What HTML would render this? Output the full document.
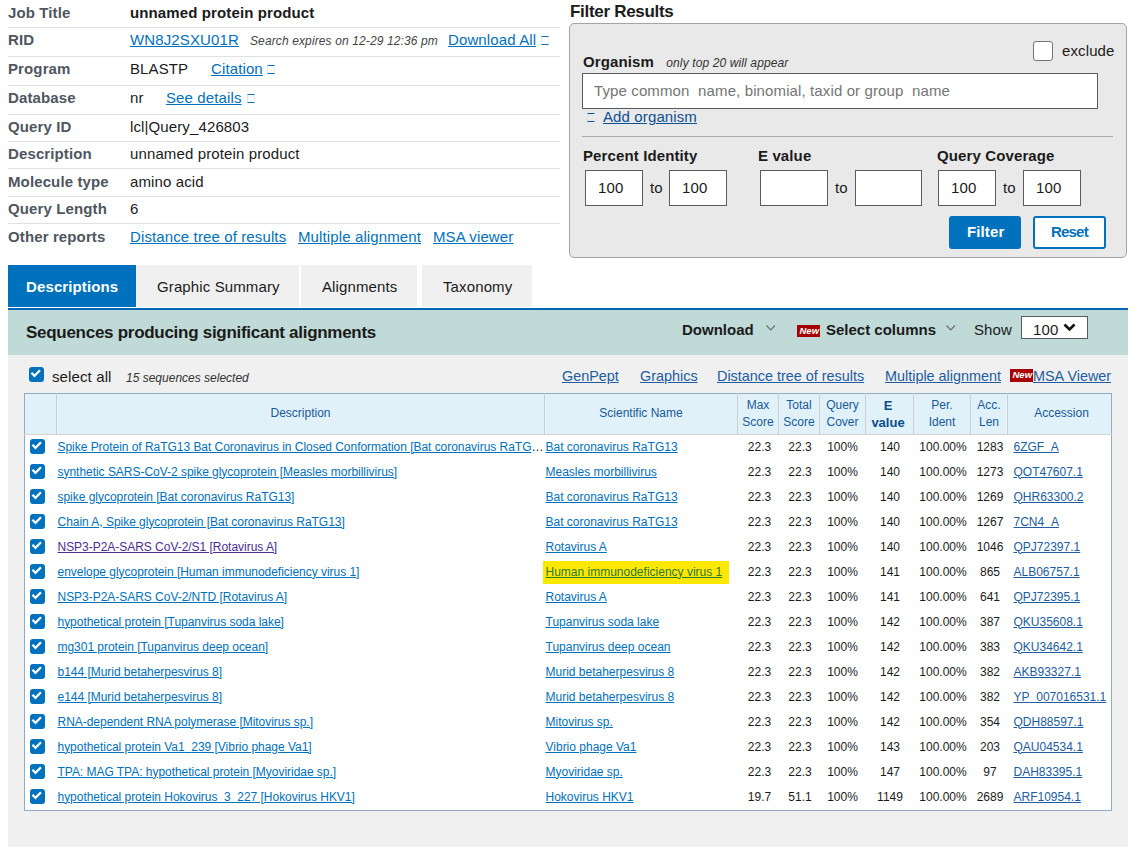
<!DOCTYPE html>
<html><head><meta charset="utf-8">
<style>
*{box-sizing:border-box;margin:0;padding:0}
html,body{width:1137px;height:865px;overflow:hidden;background:#fff}
body{font-family:"Liberation Sans",sans-serif;font-size:15px;color:#1b1b1b;position:relative}
.a{position:absolute;white-space:nowrap;line-height:17px;letter-spacing:0.12px}
.lbl{font-weight:bold;color:#4f5660}
.lk{color:#0071bc;text-decoration:underline}
.ln{position:absolute;left:8px;width:552px;height:1px;background:#dfe1e2}
.ext{position:absolute;width:8px;height:9px;border-top:1px solid #0071bc;border-bottom:1px solid #0071bc;border-left:1px solid #e4e4f4;border-right:1px solid #ececec}
.i12{font-size:12px;font-style:italic;color:#333}
.fb{position:absolute;background:#fff;border:1px solid #565c65}
.flbl{font-weight:bold;color:#1b1b1b}
.tab{position:absolute;top:265px;height:42px;background:#f0f0f0}
.chk{position:absolute;width:15px;height:15px;background:#0071bc;border-radius:3px}
.chk svg{position:absolute;left:0;top:0}
.newb{position:absolute;width:23px;height:12px;background:#a80000;color:#fff;font-size:9.5px;font-weight:bold;font-style:italic;line-height:13px;padding-left:2.5px;white-space:nowrap;letter-spacing:0}
.dk{color:#205da0;text-decoration:underline}
table.res{position:absolute;left:24px;top:393px;width:1088px;border-collapse:collapse;table-layout:fixed;font-size:12px;background:#fff}
table.res{border:1px solid #8fabc7}
.res th{background:#e1f1f9;color:#165a98;font-weight:normal;height:41px;line-height:17px;border-left:1px solid #cfcfcf;border-bottom:1px solid #d4d4d4;padding:0}
.res th:first-child{border-left:none}
.res td{height:25px;padding:0;text-align:center;white-space:nowrap;overflow:hidden;color:#1b1b1b;position:relative;line-height:17px}
.res td .chk{left:5px;top:4px}
.res td.d{text-align:left;padding-left:1px;letter-spacing:-0.03px}
.res td.s{text-align:left;padding-left:1px;overflow:visible}
.res td.acc{text-align:left;padding-left:6px}
.us{position:relative;top:-1px}
.res td:nth-child(4){padding-left:3px}.res td:nth-child(5){padding-left:2px}.res td:nth-child(7){padding-left:1px}.res td:nth-child(8){padding-left:2px}.res td:nth-child(9){padding-left:2px}
.res tbody tr:last-child td{height:26px}
.res a{color:#0071bc;text-decoration:underline}
.res td.acc a{color:#205da0}
.res a.v{color:#4c2c92}
.hl{position:absolute;left:-2px;top:1px;width:186px;height:23px;background:#ffe800}
</style></head><body>

<!-- info table -->
<div class="a lbl" style="left:8px;top:4px">Job Title</div>
<div class="a" style="left:130px;top:4px;font-weight:bold">unnamed protein product</div>
<div class="ln" style="top:27px"></div>
<div class="a lbl" style="left:8px;top:31px">RID</div>
<div class="a lk" style="left:130px;top:31px">WN8J2SXU01R</div>
<div class="a i12" style="left:250px;top:33px;letter-spacing:0.12px;color:#444">Search expires on 12-29 12:36 pm</div>
<div class="a lk" style="left:448px;top:31px">Download All</div>
<span class="ext" style="left:541px;top:36px"></span>
<div class="ln" style="top:56px"></div>
<div class="a lbl" style="left:8px;top:60px">Program</div>
<div class="a" style="left:130px;top:60px">BLASTP</div>
<div class="a lk" style="left:211px;top:60px">Citation</div>
<span class="ext" style="left:267px;top:65px"></span>
<div class="ln" style="top:85px"></div>
<div class="a lbl" style="left:8px;top:89px">Database</div>
<div class="a" style="left:130px;top:89px">nr</div>
<div class="a lk" style="left:166px;top:89px">See details</div>
<span class="ext" style="left:247px;top:94px"></span>
<div class="ln" style="top:114px"></div>
<div class="a lbl" style="left:8px;top:118px">Query ID</div>
<div class="a" style="left:130px;top:118px">lcl|Query_426803</div>
<div class="ln" style="top:141px"></div>
<div class="a lbl" style="left:8px;top:145px">Description</div>
<div class="a" style="left:130px;top:145px">unnamed protein product</div>
<div class="ln" style="top:168px"></div>
<div class="a lbl" style="left:8px;top:173px">Molecule type</div>
<div class="a" style="left:130px;top:173px">amino acid</div>
<div class="ln" style="top:196px"></div>
<div class="a lbl" style="left:8px;top:200px">Query Length</div>
<div class="a" style="left:130px;top:200px">6</div>
<div class="ln" style="top:223px"></div>
<div class="a lbl" style="left:8px;top:228px">Other reports</div>
<div class="a lk" style="left:130px;top:228px">Distance tree of results</div>
<div class="a lk" style="left:298px;top:228px">Multiple alignment</div>
<div class="a lk" style="left:433px;top:228px">MSA viewer</div>

<!-- filter -->
<div class="a" style="left:570px;top:3px;font-size:17px;font-weight:bold;letter-spacing:-0.3px;color:#1b1b1b">Filter Results</div>
<div style="position:absolute;left:569px;top:23px;width:558px;height:235px;background:#e9e9e9;border:1px solid #a4a4a4;border-radius:5px"></div>
<div style="position:absolute;left:1033px;top:41px;width:20px;height:20px;background:#fff;border:1px solid #71767a;border-radius:3px"></div>
<div class="a" style="left:1062px;top:42px">exclude</div>
<div class="a flbl" style="left:583px;top:53px">Organism <span class="i12" style="font-weight:normal;margin-left:8px">only top 20 will appear</span></div>
<div class="fb" style="left:582px;top:73px;width:516px;height:36px"></div>
<div class="a" style="left:594px;top:82px;color:#757575">Type common&nbsp; name, binomial, taxid or group&nbsp; name</div>
<span class="ext" style="left:587px;top:113px;width:8px;height:9px;border-top-color:#0d5090;border-bottom-color:#0d5090"></span>
<div class="a dk" style="left:603px;top:108px;color:#0d5090">Add organism</div>
<div style="position:absolute;left:582px;top:136px;width:531px;height:1px;background:#aaa"></div>
<div class="a flbl" style="left:583px;top:147px">Percent Identity</div>
<div class="a flbl" style="left:758px;top:147px">E value</div>
<div class="a flbl" style="left:937px;top:147px">Query Coverage</div>
<div class="fb" style="left:585px;top:170px;width:58px;height:36px"></div>
<div class="a" style="left:598px;top:179px">100</div>
<div class="a" style="left:650px;top:179px">to</div>
<div class="fb" style="left:669px;top:170px;width:58px;height:36px"></div>
<div class="a" style="left:682px;top:179px">100</div>
<div class="fb" style="left:760px;top:170px;width:68px;height:36px"></div>
<div class="a" style="left:835px;top:179px">to</div>
<div class="fb" style="left:855px;top:170px;width:67px;height:36px"></div>
<div class="fb" style="left:938px;top:170px;width:58px;height:36px"></div>
<div class="a" style="left:951px;top:179px">100</div>
<div class="a" style="left:1003px;top:179px">to</div>
<div class="fb" style="left:1023px;top:170px;width:58px;height:36px"></div>
<div class="a" style="left:1036px;top:179px">100</div>
<div style="position:absolute;left:949px;top:216px;width:72px;height:33px;background:#0071bc;border-radius:3px"></div>
<div class="a" style="left:967px;top:223px;color:#fff;font-weight:bold">Filter</div>
<div style="position:absolute;left:1033px;top:216px;width:73px;height:33px;background:#fff;border:2px solid #0071bc;border-radius:3px"></div>
<div class="a" style="left:1051px;top:223px;color:#0071bc;font-weight:bold;letter-spacing:-0.8px">Reset</div>

<!-- tabs -->
<div class="tab" style="left:8px;width:128px;background:#0071bc"></div>
<div class="a" style="left:26px;top:278px;color:#fff;font-weight:bold">Descriptions</div>
<div class="tab" style="left:136px;width:163px"></div>
<div class="a" style="left:157px;top:278px">Graphic Summary</div>
<div class="tab" style="left:301px;width:116px"></div>
<div class="a" style="left:322px;top:278px">Alignments</div>
<div class="tab" style="left:422px;width:110px"></div>
<div class="a" style="left:443px;top:278px">Taxonomy</div>
<div style="position:absolute;left:8px;top:308px;width:1120px;height:2px;background:#0067b5"></div>

<!-- teal band -->
<div style="position:absolute;left:8px;top:310px;width:1120px;height:45px;background:#bfdad7"></div>
<div class="a" style="left:26px;top:324px;font-size:17px;font-weight:bold;letter-spacing:-0.28px;color:#1b1b1b">Sequences producing significant alignments</div>
<div class="a" style="left:682px;top:321px;font-weight:bold;color:#1b1b1b;letter-spacing:0">Download</div>
<svg style="position:absolute;left:766px;top:325px" width="10" height="6"><polyline points="0.5,0.5 4.75,5 9,0.5" fill="none" stroke="#6b6b6b" stroke-width="1.1"/></svg>
<div class="newb" style="left:797px;top:325px;line-height:11px">New</div>
<div class="a" style="left:826px;top:321px;font-weight:bold;color:#1b1b1b;letter-spacing:0">Select columns</div>
<svg style="position:absolute;left:946px;top:325px" width="10" height="6"><polyline points="0.5,0.5 4.75,5 9,0.5" fill="none" stroke="#6b6b6b" stroke-width="1.1"/></svg>
<div class="a" style="left:974px;top:321px;color:#1b1b1b">Show</div>
<div style="position:absolute;left:1021px;top:316px;width:67px;height:23px;background:#fff;border:1px solid #565c65"></div>
<div class="a" style="left:1033px;top:321px">100</div>
<svg style="position:absolute;left:1063px;top:323px" width="13" height="9"><polyline points="1.5,1.5 6.5,6.5 11.5,1.5" fill="none" stroke="#111" stroke-width="2.6"/></svg>

<!-- gray area -->
<div style="position:absolute;left:8px;top:355px;width:1120px;height:492px;background:#f0f0f0"></div>
<div class="chk" style="left:29px;top:367px"><svg width="15" height="15"><polyline points="2.4,5.8 5.5,8.9 11,3.3" fill="none" stroke="#fff" stroke-width="2.3"/></svg></div>
<div class="a" style="left:52px;top:368px">select all</div>
<div class="a i12" style="left:126px;top:370px;letter-spacing:0">15 sequences selected</div>
<div class="a dk" style="left:562px;top:368px;font-size:14.4px;letter-spacing:0">GenPept</div>
<div class="a dk" style="left:640px;top:368px;font-size:14.4px;letter-spacing:0">Graphics</div>
<div class="a dk" style="left:717px;top:368px;font-size:14.4px;letter-spacing:0">Distance tree of results</div>
<div class="a dk" style="left:885px;top:368px;font-size:14.4px;letter-spacing:0">Multiple alignment</div>
<div class="newb" style="left:1010px;top:369px;height:13px;line-height:12px">New</div>
<div class="a dk" style="left:1033px;top:368px;font-size:14.4px;letter-spacing:0">MSA Viewer</div>

<table class="res">
<colgroup><col style="width:32px"><col style="width:488px"><col style="width:193px"><col style="width:41px"><col style="width:41px"><col style="width:46px"><col style="width:48px"><col style="width:57px"><col style="width:37px"><col style="width:104px"></colgroup>
<thead><tr><th></th><th style="padding-bottom:2px">Description</th><th style="padding-bottom:2px">Scientific Name</th><th>Max<br>Score</th><th>Total<br>Score</th><th>Query<br>Cover</th><th style="font-weight:bold;font-size:13px;color:#0b4c8a;padding-right:3px">E<br>value</th><th>Per.<br>Ident</th><th>Acc.<br>Len</th><th style="padding:0 0 2px 4px">Accession</th></tr></thead>
<tbody id="tb">
<tr><td><i class="chk"><svg width="15" height="15"><polyline points="2.4,5.8 5.5,8.9 11,3.3" fill="none" stroke="#fff" stroke-width="2.3"/></svg></i></td><td class="d"><a style="letter-spacing:-0.035px">Spike Protein of RaTG13 Bat Coronavirus in Closed Conformation [Bat coronavirus RaTG</a><span style="color:#1b1b1b">…</span></td><td class="s"><a>Bat coronavirus RaTG13</a></td><td>22.3</td><td>22.3</td><td>100%</td><td>140</td><td>100.00%</td><td>1283</td><td class="acc"><a>6ZGF<span class="us">_</span>A</a></td></tr>
<tr><td><i class="chk"><svg width="15" height="15"><polyline points="2.4,5.8 5.5,8.9 11,3.3" fill="none" stroke="#fff" stroke-width="2.3"/></svg></i></td><td class="d"><a>synthetic SARS-CoV-2 spike glycoprotein [Measles morbillivirus]</a></td><td class="s"><a>Measles morbillivirus</a></td><td>22.3</td><td>22.3</td><td>100%</td><td>140</td><td>100.00%</td><td>1273</td><td class="acc"><a>QOT47607.1</a></td></tr>
<tr><td><i class="chk"><svg width="15" height="15"><polyline points="2.4,5.8 5.5,8.9 11,3.3" fill="none" stroke="#fff" stroke-width="2.3"/></svg></i></td><td class="d"><a>spike glycoprotein [Bat coronavirus RaTG13]</a></td><td class="s"><a>Bat coronavirus RaTG13</a></td><td>22.3</td><td>22.3</td><td>100%</td><td>140</td><td>100.00%</td><td>1269</td><td class="acc"><a>QHR63300.2</a></td></tr>
<tr><td><i class="chk"><svg width="15" height="15"><polyline points="2.4,5.8 5.5,8.9 11,3.3" fill="none" stroke="#fff" stroke-width="2.3"/></svg></i></td><td class="d"><a>Chain A, Spike glycoprotein [Bat coronavirus RaTG13]</a></td><td class="s"><a>Bat coronavirus RaTG13</a></td><td>22.3</td><td>22.3</td><td>100%</td><td>140</td><td>100.00%</td><td>1267</td><td class="acc"><a>7CN4<span class="us">_</span>A</a></td></tr>
<tr><td><i class="chk"><svg width="15" height="15"><polyline points="2.4,5.8 5.5,8.9 11,3.3" fill="none" stroke="#fff" stroke-width="2.3"/></svg></i></td><td class="d"><a class="v">NSP3-P2A-SARS CoV-2/S1 [Rotavirus A]</a></td><td class="s"><a>Rotavirus A</a></td><td>22.3</td><td>22.3</td><td>100%</td><td>140</td><td>100.00%</td><td>1046</td><td class="acc"><a>QPJ72397.1</a></td></tr>
<tr><td><i class="chk"><svg width="15" height="15"><polyline points="2.4,5.8 5.5,8.9 11,3.3" fill="none" stroke="#fff" stroke-width="2.3"/></svg></i></td><td class="d"><a>envelope glycoprotein [Human immunodeficiency virus 1]</a></td><td class="s"><i class="hl"></i><a style="position:relative;color:#2a7a2a">Human immunodeficiency virus 1</a></td><td>22.3</td><td>22.3</td><td>100%</td><td>141</td><td>100.00%</td><td>865</td><td class="acc"><a>ALB06757.1</a></td></tr>
<tr><td><i class="chk"><svg width="15" height="15"><polyline points="2.4,5.8 5.5,8.9 11,3.3" fill="none" stroke="#fff" stroke-width="2.3"/></svg></i></td><td class="d"><a>NSP3-P2A-SARS CoV-2/NTD [Rotavirus A]</a></td><td class="s"><a>Rotavirus A</a></td><td>22.3</td><td>22.3</td><td>100%</td><td>141</td><td>100.00%</td><td>641</td><td class="acc"><a>QPJ72395.1</a></td></tr>
<tr><td><i class="chk"><svg width="15" height="15"><polyline points="2.4,5.8 5.5,8.9 11,3.3" fill="none" stroke="#fff" stroke-width="2.3"/></svg></i></td><td class="d"><a>hypothetical protein [Tupanvirus soda lake]</a></td><td class="s"><a>Tupanvirus soda lake</a></td><td>22.3</td><td>22.3</td><td>100%</td><td>142</td><td>100.00%</td><td>387</td><td class="acc"><a>QKU35608.1</a></td></tr>
<tr><td><i class="chk"><svg width="15" height="15"><polyline points="2.4,5.8 5.5,8.9 11,3.3" fill="none" stroke="#fff" stroke-width="2.3"/></svg></i></td><td class="d"><a>mg301 protein [Tupanvirus deep ocean]</a></td><td class="s"><a>Tupanvirus deep ocean</a></td><td>22.3</td><td>22.3</td><td>100%</td><td>142</td><td>100.00%</td><td>383</td><td class="acc"><a>QKU34642.1</a></td></tr>
<tr><td><i class="chk"><svg width="15" height="15"><polyline points="2.4,5.8 5.5,8.9 11,3.3" fill="none" stroke="#fff" stroke-width="2.3"/></svg></i></td><td class="d"><a>b144 [Murid betaherpesvirus 8]</a></td><td class="s"><a>Murid betaherpesvirus 8</a></td><td>22.3</td><td>22.3</td><td>100%</td><td>142</td><td>100.00%</td><td>382</td><td class="acc"><a>AKB93327.1</a></td></tr>
<tr><td><i class="chk"><svg width="15" height="15"><polyline points="2.4,5.8 5.5,8.9 11,3.3" fill="none" stroke="#fff" stroke-width="2.3"/></svg></i></td><td class="d"><a>e144 [Murid betaherpesvirus 8]</a></td><td class="s"><a>Murid betaherpesvirus 8</a></td><td>22.3</td><td>22.3</td><td>100%</td><td>142</td><td>100.00%</td><td>382</td><td class="acc"><a>YP<span class="us">_</span>007016531.1</a></td></tr>
<tr><td><i class="chk"><svg width="15" height="15"><polyline points="2.4,5.8 5.5,8.9 11,3.3" fill="none" stroke="#fff" stroke-width="2.3"/></svg></i></td><td class="d"><a>RNA-dependent RNA polymerase [Mitovirus sp.]</a></td><td class="s"><a>Mitovirus sp.</a></td><td>22.3</td><td>22.3</td><td>100%</td><td>142</td><td>100.00%</td><td>354</td><td class="acc"><a>QDH88597.1</a></td></tr>
<tr><td><i class="chk"><svg width="15" height="15"><polyline points="2.4,5.8 5.5,8.9 11,3.3" fill="none" stroke="#fff" stroke-width="2.3"/></svg></i></td><td class="d"><a>hypothetical protein Va1<span class="us">_</span>239 [Vibrio phage Va1]</a></td><td class="s"><a>Vibrio phage Va1</a></td><td>22.3</td><td>22.3</td><td>100%</td><td>143</td><td>100.00%</td><td>203</td><td class="acc"><a>QAU04534.1</a></td></tr>
<tr><td><i class="chk"><svg width="15" height="15"><polyline points="2.4,5.8 5.5,8.9 11,3.3" fill="none" stroke="#fff" stroke-width="2.3"/></svg></i></td><td class="d"><a>TPA: MAG TPA: hypothetical protein [Myoviridae sp.]</a></td><td class="s"><a>Myoviridae sp.</a></td><td>22.3</td><td>22.3</td><td>100%</td><td>147</td><td>100.00%</td><td>97</td><td class="acc"><a>DAH83395.1</a></td></tr>
<tr><td><i class="chk"><svg width="15" height="15"><polyline points="2.4,5.8 5.5,8.9 11,3.3" fill="none" stroke="#fff" stroke-width="2.3"/></svg></i></td><td class="d"><a>hypothetical protein Hokovirus<span class="us">_</span>3<span class="us">_</span>227 [Hokovirus HKV1]</a></td><td class="s"><a>Hokovirus HKV1</a></td><td>19.7</td><td>51.1</td><td>100%</td><td>1149</td><td>100.00%</td><td>2689</td><td class="acc"><a>ARF10954.1</a></td></tr>
</tbody></table>
</body></html>
